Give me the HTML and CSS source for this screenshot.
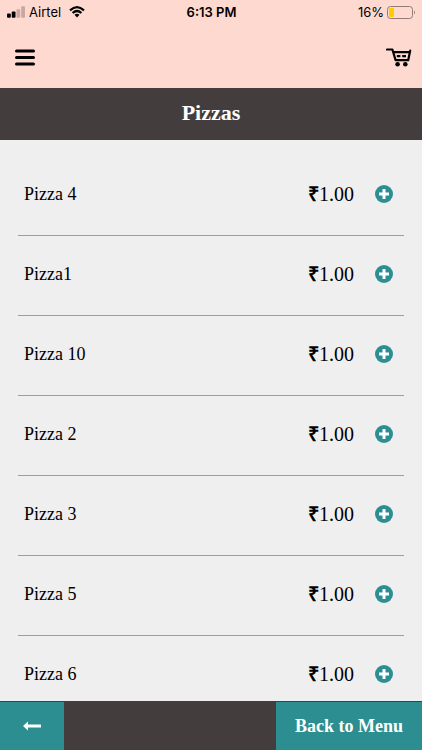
FILE: index.html
```html
<!DOCTYPE html>
<html lang="en">
<head>
<meta charset="utf-8">
<meta name="viewport" content="width=device-width, initial-scale=1">
<title>Pizzas</title>
<link rel="stylesheet" href="styles.css">
</head>
<body>
<header class="top">
  <div class="status">
    <div class="status-side">
      <svg class="signal" viewBox="0 0 19 12" aria-hidden="true"><rect x="0" y="7.5" width="4" height="4.5" rx="1"/><rect x="5" y="5.5" width="4" height="6.5" rx="1"/><g fill="#c9a8a1"><rect x="10" y="3" width="4" height="9" rx="1"/><rect x="15" y="0" width="4" height="12" rx="1"/></g></svg>
      <span class="carrier">Airtel</span>
      <svg class="wifi" viewBox="0 0 16 12" aria-hidden="true"><path d="M1 4.4Q8-2 15 4.4M3.6 7Q8 3 12.4 7" fill="none" stroke="#000" stroke-width="2.2"/><path d="M5.5 8.8Q8 6.9 10.5 8.8L8 11.4Z"/></svg>
    </div>
    <span class="clock">6:13 PM</span>
    <div class="status-side status-end">
      <span>16%</span>
      <svg class="battery" viewBox="0 0 29 13" aria-hidden="true"><rect x=".5" y=".5" width="25" height="12" rx="3" fill="none" stroke="#927b75"/><rect x="2" y="2" width="5" height="9" rx="1" fill="#fc0"/><path d="M27 4.5Q29 6.5 27 8.5Z" fill="#927b75"/></svg>
    </div>
  </div>
  <nav class="toolbar">
    <button class="icon-button" aria-label="Menu"><svg class="bars" viewBox="0 0 20 17"><path d="M1.5 2h17M1.5 8.5h17M1.5 15h17" stroke="#000" stroke-width="3" stroke-linecap="round"/></svg></button>
    <button class="icon-button" aria-label="Cart"><svg class="cart" viewBox="0 0 26 19"><path d="M1 1.5H6.4L9.6 12.2H22.2L24.2 2.6M7.3 4.2H23.6" fill="none" stroke="#000" stroke-width="2.2" stroke-linecap="round" stroke-linejoin="round"/><path d="M10.8 8.2h3.6M16.2 8.2h3.8" stroke="#000" stroke-width="2.2"/><circle cx="11.6" cy="16.3" r="2.3"/><circle cx="19.3" cy="16.3" r="2.3"/></svg></button>
  </nav>
</header>
<h1 class="title">Pizzas</h1>
<main class="content">
  <ul class="list">
    <li class="item"><span>Pizza 4</span><span class="price"><span class="rupee">₹</span>1.00</span><button class="add" aria-label="Add Pizza 4"><svg viewBox="0 0 18 18"><circle cx="9" cy="9" r="9"/><path d="M9 4v10M4 9h10"/></svg></button></li>
    <li class="item"><span>Pizza1</span><span class="price"><span class="rupee">₹</span>1.00</span><button class="add" aria-label="Add Pizza1"><svg viewBox="0 0 18 18"><circle cx="9" cy="9" r="9"/><path d="M9 4v10M4 9h10"/></svg></button></li>
    <li class="item"><span>Pizza 10</span><span class="price"><span class="rupee">₹</span>1.00</span><button class="add" aria-label="Add Pizza 10"><svg viewBox="0 0 18 18"><circle cx="9" cy="9" r="9"/><path d="M9 4v10M4 9h10"/></svg></button></li>
    <li class="item"><span>Pizza 2</span><span class="price"><span class="rupee">₹</span>1.00</span><button class="add" aria-label="Add Pizza 2"><svg viewBox="0 0 18 18"><circle cx="9" cy="9" r="9"/><path d="M9 4v10M4 9h10"/></svg></button></li>
    <li class="item"><span>Pizza 3</span><span class="price"><span class="rupee">₹</span>1.00</span><button class="add" aria-label="Add Pizza 3"><svg viewBox="0 0 18 18"><circle cx="9" cy="9" r="9"/><path d="M9 4v10M4 9h10"/></svg></button></li>
    <li class="item"><span>Pizza 5</span><span class="price"><span class="rupee">₹</span>1.00</span><button class="add" aria-label="Add Pizza 5"><svg viewBox="0 0 18 18"><circle cx="9" cy="9" r="9"/><path d="M9 4v10M4 9h10"/></svg></button></li>
    <li class="item"><span>Pizza 6</span><span class="price"><span class="rupee">₹</span>1.00</span><button class="add" aria-label="Add Pizza 6"><svg viewBox="0 0 18 18"><circle cx="9" cy="9" r="9"/><path d="M9 4v10M4 9h10"/></svg></button></li>
  </ul>
</main>
<footer class="bottom">
  <button class="back" aria-label="Back"><svg viewBox="0 0 18 10"><path d="M0 5L5 .5V3.5H18V6.5H5V9.5Z" fill="#fff"/></svg></button>
  <a class="menu-link" href="#menu">Back to Menu</a>
</footer>
</body>
</html>
```
FILE: styles.css
```css
* {
  box-sizing: border-box;
}

body {
  margin: 0;
  height: 100vh;
  display: flex;
  flex-direction: column;
  background: #efefef;
  color: #000;
  font-family: "Liberation Serif", "Times New Roman", serif;
}

button {
  padding: 0;
  border: 0;
  background: none;
  cursor: pointer;
}

svg {
  display: block;
}

.top {
  flex: none;
  background: #fdd9d0;
}

.status {
  display: flex;
  align-items: center;
  height: 24px;
  padding: 0 6px 0 7px;
  font: 13px/16px Inter, sans-serif;
}

.status-side {
  flex: 1;
  display: flex;
  align-items: center;
  gap: 4px;
}

.status-end {
  justify-content: flex-end;
  gap: 3px;
}

.carrier {
  margin-right: 4px;
}

.clock {
  font-weight: 600;
}

.signal {
  width: 18px;
  height: 12px;
}

.wifi {
  width: 16px;
  height: 12px;
}

.battery {
  width: 29px;
  height: 13px;
}

.toolbar {
  display: flex;
  align-items: center;
  justify-content: space-between;
  height: 64px;
  padding: 2px 10px 0 15px;
}

.bars {
  width: 20px;
  height: 17px;
}

.cart {
  width: 26px;
  height: 19px;
}

.title {
  flex: none;
  margin: 0;
  padding: 11px 0 14px;
  background: #433e3d;
  color: #fff;
  font-size: 22px;
  line-height: 27px;
  text-align: center;
}

.content {
  flex: 1;
  min-height: 0;
  overflow: hidden;
}

.list {
  margin: 0;
  padding: 16px 18px 0;
  list-style: none;
}

.item {
  display: grid;
  grid-template-columns: 1fr auto 18px;
  align-items: center;
  column-gap: 21px;
  height: 80px;
  padding: 0 11px 3px 6px;
  border-bottom: 1px solid #a09c9c;
  font-size: 18px;
  line-height: 24px;
}

.price {
  font-size: 20px;
}

.rupee {
  font-family: "Liberation Sans", Arial, sans-serif;
  font-weight: 700;
}

.add {
  width: 18px;
  height: 18px;
  fill: #2c8e91;
}

.add path {
  stroke: #fff;
  stroke-width: 3px;
}

.bottom {
  flex: none;
  display: flex;
  justify-content: space-between;
  height: 49px;
  border-top: 1px solid #433e3d;
  background: #433e3d;
}

.back,
.menu-link {
  display: flex;
  align-items: center;
  justify-content: center;
  background: #2c8e91;
}

.back {
  width: 64px;
}

.back svg {
  width: 18px;
  height: 10px;
}

.menu-link {
  padding: 0 19px;
  color: #fff;
  font-size: 18px;
  font-weight: 700;
  text-decoration: none;
}
```
